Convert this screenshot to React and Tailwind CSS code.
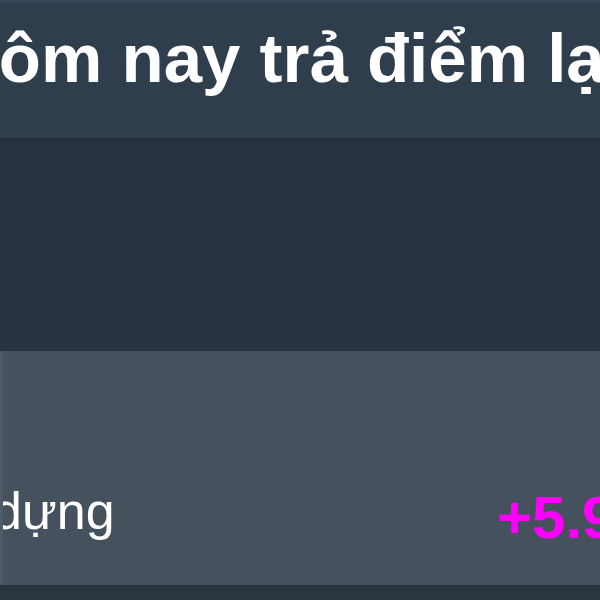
const App = () => {
    return (
        <div className="w-[600px] h-[600px] overflow-hidden bg-[#2a3540] font-['Liberation_Sans',Arial,sans-serif]">
            <div className="h-[138px] bg-[#2f3e4d] border-t-2 border-[#36475a] flex items-center overflow-hidden">
                <h1 className="shrink-0 -ml-[51px] mt-[-24px] whitespace-nowrap text-[69px] leading-none font-bold text-white">
                    Hôm nay trả điểm lại
                </h1>
            </div>
            <div className="h-[3px] bg-[#222d36]" />
            <div className="h-[210px] bg-[#28343f]" />
            <div className="h-[234px] bg-[#45515c] border-l-[3px] border-[#4e5a66] flex items-center overflow-hidden">
                <span className="shrink-0 w-[608px] -ml-[114px] mt-[86px] whitespace-nowrap text-[52px] leading-none text-white">
                    Xây dựng
                </span>
                <span className="shrink-0 mt-[100px] whitespace-nowrap text-[60px] leading-none font-bold text-[#ff00ff]">
                    +5.96%
                </span>
            </div>
        </div>
    );
};

export default App;
